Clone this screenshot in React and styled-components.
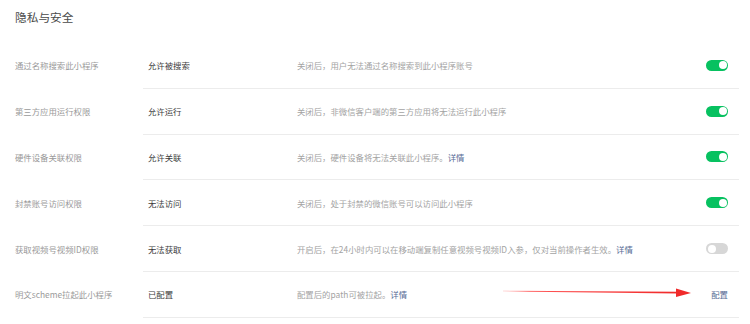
import React from "react";
import styled, { createGlobalStyle } from "styled-components";

const Global = createGlobalStyle`
  html, body { margin: 0; padding: 0; background: #fff; }
  body { font-family: "Noto Sans CJK SC", "Noto Sans", sans-serif; }
`;

const Page = styled.div`
  position: relative;
  width: 750px;
  height: 324px;
  padding: 0 11px 0 15px;
  box-sizing: border-box;
  overflow: hidden;
`;

const Title = styled.h2`
  margin: 0;
  padding-top: 9px;
  height: 43px;
  box-sizing: border-box;
  font-size: 11.7px;
  line-height: 15px;
  font-weight: 400;
  color: #4a4a4a;
`;

const Row = styled.div`
  display: flex;
  align-items: stretch;
  height: 45.8px;
`;

const Label = styled.div`
  width: 128px;
  flex: none;
  display: flex;
  align-items: center;
  padding-bottom: 1px;
  font-size: 8.4px;
  color: #9a9a9a;
`;

const Body = styled.div`
  flex: 1;
  display: flex;
  align-items: center;
  border-bottom: 1px solid #ececec;
  padding: 0 11px 0 5px;
`;

const Value = styled.div`
  width: 149px;
  flex: none;
  font-size: 8.4px;
  color: #3c3c3c;
`;

const Desc = styled.div`
  flex: 1;
  font-size: 8.4px;
  color: #a3a3a3;
  white-space: nowrap;
`;

const Link = styled.a`
  color: #576b95;
  text-decoration: none;
  cursor: pointer;
  font-size: 8.4px;
`;

const Toggle = styled.span`
  position: relative;
  display: inline-block;
  width: 22px;
  height: 11px;
  border-radius: 6px;
  background: ${(p) => (p.$on ? "#07c160" : "#d7d7d7")};
  &::after {
    content: "";
    position: absolute;
    top: 1.5px;
    left: ${(p) => (p.$on ? "12.5px" : "1.5px")};
    width: 8px;
    height: 8px;
    border-radius: 50%;
    background: #fff;
  }
`;

const Arrow = styled.svg`
  position: absolute;
  left: 500px;
  top: 285px;
`;

const rows = [
  { label: "通过名称搜索此小程序", value: "允许被搜索", desc: "关闭后，用户无法通过名称搜索到此小程序账号", on: true },
  { label: "第三方应用运行权限", value: "允许运行", desc: "关闭后，非微信客户端的第三方应用将无法运行此小程序", on: true },
  { label: "硬件设备关联权限", value: "允许关联", desc: "关闭后，硬件设备将无法关联此小程序。", link: true, on: true },
  { label: "封禁账号访问权限", value: "无法访问", desc: "关闭后，处于封禁的微信账号可以访问此小程序", on: true },
  { label: "获取视频号视频ID权限", value: "无法获取", desc: "开启后，在24小时内可以在移动端复制任意视频号视频ID入参，仅对当前操作者生效。", link: true, on: false },
  { label: "明文scheme拉起此小程序", value: "已配置", desc: "配置后的path可被拉起。", link: true, config: true },
];

export default function App() {
  return (
    <>
      <Global />
      <Page>
        <Title>隐私与安全</Title>
        {rows.map((r) => (
          <Row key={r.label}>
            <Label>{r.label}</Label>
            <Body>
              <Value>{r.value}</Value>
              <Desc>
                {r.desc}
                {r.link && <Link>详情</Link>}
              </Desc>
              {r.config ? <Link>配置</Link> : <Toggle $on={r.on} />}
            </Body>
          </Row>
        ))}
        <Arrow width="195" height="14" viewBox="0 0 195 14">
          <defs>
            <linearGradient id="ag" x1="0" x2="1" y1="0" y2="0">
              <stop offset="0" stopColor="#ff4d4d" stopOpacity="0.2" />
              <stop offset="0.15" stopColor="#ff4444" stopOpacity="0.9" />
              <stop offset="1" stopColor="#f02a2a" />
            </linearGradient>
          </defs>
          <path d="M3 5.6 L178 6.8 L178 8.6 L3 6.4 Z" fill="url(#ag)" />
          <path d="M176 3.5 L191 8 L176 12 Z" fill="#f02a2a" />
        </Arrow>
      </Page>
    </>
  );
}
